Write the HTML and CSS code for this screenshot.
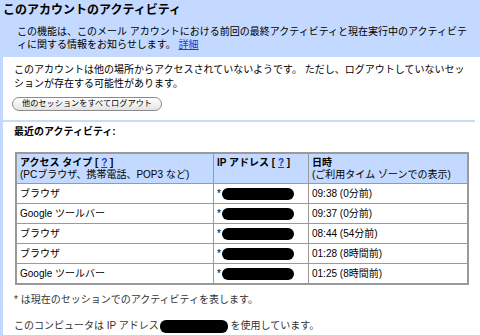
FILE: index.html
```html
<!DOCTYPE html>
<html lang="ja">
<head>
<meta charset="utf-8">
<link rel="stylesheet" href="styles.css">
</head>
<body>
<div class="page">
  <div class="header">
    <h1 class="title">このアカウントのアクティビティ</h1>
    <p class="desc">この機能は、このメール アカウントにおける前回の最終アクティビティと現在実行中のアクティビティに関する情報をお知らせします。 <a class="link" href="#">詳細</a></p>
  </div>
  <div class="content">
    <p class="intro">このアカウントは他の場所からアクセスされていないようです。 ただし、ログアウトしていないセッションが存在する可能性があります。</p>
    <div class="btnrow"><button class="btn">他のセッションをすべてログアウト</button></div>
    <div class="sep"></div>
    <h2 class="recent">最近のアクティビティ:</h2>
    <table class="tbl">
      <tr class="head">
        <th class="c1"><b>アクセス タイプ [ <a class="link" href="#">?</a> ]</b><br>(PCブラウザ、携帯電話、POP3 など)</th>
        <th class="c2"><b>IP アドレス [ <a class="link" href="#">?</a> ]</b><br>&nbsp;</th>
        <th class="c3"><b>日時</b><br>(ご利用タイム ゾーンでの表示)</th>
      </tr>
      <tr><td>ブラウザ</td><td><span class="ip">*<span class="blob"></span></span></td><td>09:38 (0分前)</td></tr>
      <tr><td>Google ツールバー</td><td><span class="ip">*<span class="blob"></span></span></td><td>09:37 (0分前)</td></tr>
      <tr><td>ブラウザ</td><td><span class="ip">*<span class="blob"></span></span></td><td>08:44 (54分前)</td></tr>
      <tr><td>ブラウザ</td><td><span class="ip">*<span class="blob"></span></span></td><td>01:28 (8時間前)</td></tr>
      <tr><td>Google ツールバー</td><td><span class="ip">*<span class="blob"></span></span></td><td>01:25 (8時間前)</td></tr>
    </table>
    <p class="note">* は現在のセッションでのアクティビティを表します。</p>
    <p class="note second">このコンピュータは IP アドレス<span class="blob big"></span> を使用しています。</p>
  </div>
</div>
</body>
</html>
```

FILE: styles.css
```css
html, body {
  margin: 0;
  padding: 0;
  background: #fff;
}
body {
  font-family: "Liberation Sans", "Noto Sans CJK JP", sans-serif;
  font-size: 10px;
  color: #000;
}
.page {
  width: 480px;
  height: 335px;
  overflow: hidden;
}
.header {
  background: #c3d9ff;
  padding: 2px 0 6px 3px;
  height: 49px;
}
.title {
  margin: 0;
  font-size: 12px;
  line-height: 16px;
  font-weight: bold;
}
.desc {
  margin: 7px 0 0 14px;
  line-height: 13px;
  width: 451px;
}
.link {
  color: #1d3ccc;
  text-decoration: underline;
}
.content {
  border-left: 3px solid #c3d9ff;
  height: 278px;
}
.intro {
  margin: 0 0 0 11px;
  padding-top: 6px;
  line-height: 14px;
  width: 456px;
}
.btnrow {
  margin: 6px 0 0 9px;
  display: flex;
}
.btn {
  font-family: inherit;
  font-size: 8.2px;
  line-height: 12px;
  height: 14px;
  width: 150px;
  padding: 0;
  border: 1px solid #8a8a8a;
  border-radius: 7px;
  background: linear-gradient(#ffffff, #e4e4e4);
  color: #000;
}
.sep {
  height: 2px;
  background: #c8dbfb;
  margin: 9px 5px 0 0;
}
.recent {
  margin: 3px 0 0 11px;
  font-size: 10px;
  line-height: 14px;
  font-weight: bold;
}
.tbl {
  margin: 13px 0 0 12px;
  width: 454px;
  border-collapse: collapse;
  border: 2px solid #9a9a9a;
}
.tbl th, .tbl td {
  border: 1px solid #9a9a9a;
  text-align: left;
  padding: 0 3px;
  font-weight: normal;
  vertical-align: middle;
  white-space: nowrap;
}
.tbl .head th {
  background: #c3d9ff;
  line-height: 12px;
  height: 29px;
}
.tbl td {
  height: 19px;
  line-height: 14px;
}
.c1 { width: 190px; }
.c2 { width: 88px; }
.ip {
  display: inline-flex;
  align-items: center;
}
.blob {
  display: inline-block;
  width: 72px;
  height: 12px;
  border-radius: 6px;
  background: #000;
  vertical-align: middle;
  margin-left: 1px;
}
.blob.big {
  width: 68px;
  height: 13px;
  margin-left: 1px;
}
.note {
  margin: 8px 0 0 11px;
  line-height: 14px;
  color: #333;
}
.note.second {
  margin-top: 12px;
}
```
